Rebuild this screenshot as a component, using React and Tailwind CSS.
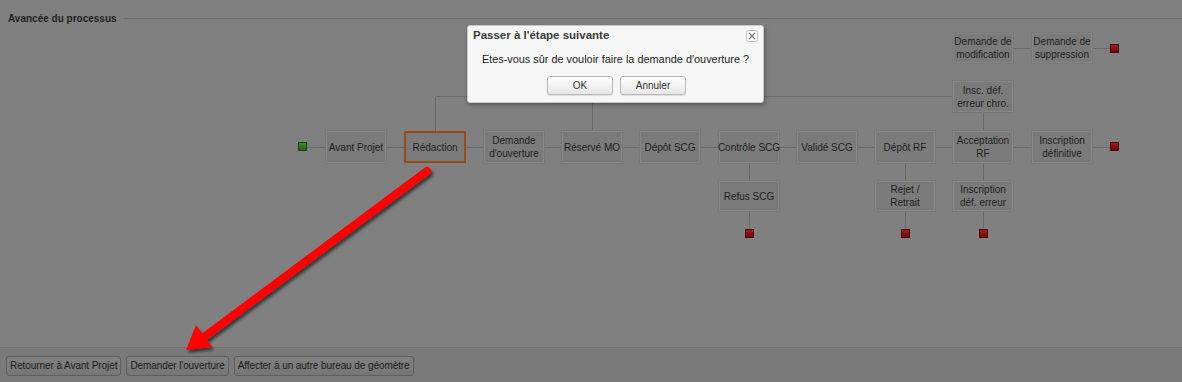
import React from "react";

const NODES = [
  { x: 326, y: 131, w: 60, h: 32, t: ["Avant Projet"] },
  { x: 404, y: 131, w: 62, h: 32, t: ["Rédaction"], active: true },
  { x: 484, y: 131, w: 60, h: 32, t: ["Demande", "d'ouverture"] },
  { x: 562, y: 131, w: 60, h: 32, t: ["Réservé MO"] },
  { x: 640, y: 131, w: 60, h: 32, t: ["Dépôt SCG"] },
  { x: 719, y: 131, w: 60, h: 32, t: ["Contrôle SCG"] },
  { x: 797, y: 131, w: 60, h: 32, t: ["Validé SCG"] },
  { x: 875, y: 131, w: 60, h: 32, t: ["Dépôt RF"] },
  { x: 953, y: 131, w: 60, h: 32, t: ["Acceptation", "RF"] },
  { x: 1032, y: 131, w: 60, h: 32, t: ["Inscription", "définitive"] },
  { x: 719, y: 181, w: 60, h: 30, t: ["Refus SCG"] },
  { x: 875, y: 181, w: 60, h: 30, t: ["Rejet /", "Retrait"] },
  { x: 953, y: 181, w: 60, h: 30, t: ["Inscription", "déf. erreur"] },
  { x: 953, y: 81, w: 60, h: 31, t: ["Insc. déf.", "erreur chro."] },
  { x: 953, y: 33, w: 60, h: 30, t: ["Demande de", "modification"] },
  { x: 1032, y: 33, w: 60, h: 30, t: ["Demande de", "suppression"] },
];

const ENDS = [
  { x: 1110, y: 142 },
  { x: 1110, y: 44 },
  { x: 745, y: 229 },
  { x: 901, y: 229 },
  { x: 979, y: 229 },
];

const TOP = 37;

function Node({ n }) {
  return (
    <div
      className={
        "absolute flex flex-col items-center justify-center text-center text-[10px] leading-[13px] text-[#1e1e1e] whitespace-nowrap " +
        (n.active
          ? "border-2 border-[#984a18] bg-[#7b7b7b]"
          : "border border-[#868686] bg-[#7b7b7b] shadow-[0_0_0_1px_#797979]")
      }
      style={{ left: n.x, top: n.y - TOP, width: n.w, height: n.h }}
    >
      {n.t.map((l, i) => (
        <span key={i}>{l}</span>
      ))}
    </div>
  );
}

function Square({ x, y, green }) {
  return (
    <div
      className={
        "absolute w-[9px] h-[9px] border " +
        (green
          ? "border-[#1d4012] bg-gradient-to-b from-[#3f8a2a] to-[#2a5f1a]"
          : "border-[#4a0606] bg-gradient-to-b from-[#a3191b] to-[#6e0a0a]")
      }
      style={{ left: x, top: y - TOP }}
    />
  );
}

function BarButton({ children }) {
  return (
    <button className="h-[20px] px-[3px] rounded-[3px] border border-[#5f5f5f] bg-gradient-to-b from-[#818181] to-[#767676] text-[10px] tracking-[-0.08px] text-[#1c1c1c] leading-none whitespace-nowrap">
      {children}
    </button>
  );
}

function DlgButton({ children }) {
  return (
    <button className="w-[66px] h-[19px] rounded-[3px] border border-[#b8b8b8] bg-gradient-to-b from-[#ffffff] to-[#e6e6e6] text-[10px] text-[#333] leading-none shadow-[0_1px_1px_rgba(0,0,0,0.1)]">
      {children}
    </button>
  );
}

export default function App() {
  const lineColor = "#6a6a6a";
  return (
    <div className="relative w-[1182px] h-[382px] bg-[#808080] overflow-hidden flex flex-col font-['Liberation_Sans',Arial,sans-serif]">
      {/* header */}
      <div className="h-[37px] flex items-center gap-[7px] pl-[8px] pb-[1px]">
        <span className="text-[10px] font-bold text-[#1f1f1f] whitespace-nowrap">
          Avancée du processus
        </span>
        <div className="flex-1 h-px bg-[#6d6d6d]" />
      </div>

      {/* diagram canvas */}
      <div className="relative flex-1">
        <svg
          className="absolute inset-0"
          width="1182"
          height="310"
          viewBox="0 37 1182 310"
          shapeRendering="crispEdges"
        >
          <g stroke={lineColor} strokeWidth="1" fill="none">
            <line x1="307" y1="147.5" x2="1110" y2="147.5" />
            <line x1="435.5" y1="96.5" x2="435.5" y2="131" />
            <line x1="435.5" y1="96.5" x2="953" y2="96.5" />
            <line x1="592.5" y1="96.5" x2="592.5" y2="131" />
            <line x1="983.5" y1="112" x2="983.5" y2="131" />
            <line x1="749.5" y1="163" x2="749.5" y2="229" />
            <line x1="905.5" y1="163" x2="905.5" y2="229" />
            <line x1="983.5" y1="163" x2="983.5" y2="229" />
            <line x1="1013" y1="48.5" x2="1110" y2="48.5" />
          </g>
        </svg>
        <Square x={298} y={142} green />
        {ENDS.map((e, i) => (
          <Square key={i} x={e.x} y={e.y} />
        ))}
        {NODES.map((n, i) => (
          <Node key={i} n={n} />
        ))}
      </div>

      {/* bottom bar */}
      <div className="h-[35px] border-t border-[#727272] bg-[#7a7a7a] flex items-center gap-[5px] pl-[6px] pt-[1px]">
        <BarButton>Retourner à Avant Projet</BarButton>
        <BarButton>Demander l'ouverture</BarButton>
        <BarButton>Affecter à un autre bureau de géomètre</BarButton>
      </div>

      {/* dialog */}
      <div className="absolute left-[467px] top-[25px] w-[297px] h-[78px] rounded-[3px] border border-[#c9c9c9] bg-[#f6f6f6] shadow-[1px_2px_4px_rgba(0,0,0,0.35)] flex flex-col">
        <div className="h-[20px] flex items-center justify-between pl-[5px] pr-[5px]">
          <span className="text-[11.5px] font-bold text-[#3a3a3a]">
            Passer à l'étape suivante
          </span>
          <div className="w-[12px] h-[12px] border border-[#c4c4c4] rounded-[2px] bg-[#fafafa] flex items-center justify-center">
            <svg width="8" height="8" viewBox="0 0 8 8">
              <path d="M1 1 L7 7 M7 1 L1 7" stroke="#777" strokeWidth="1.2" />
            </svg>
          </div>
        </div>
        <div className="h-[26px] flex items-center justify-center text-[10.9px] text-[#222]">
          Etes-vous sûr de vouloir faire la demande d'ouverture ?
        </div>
        <div className="mt-[4px] flex justify-center gap-[7px] pl-[2px]">
          <DlgButton>OK</DlgButton>
          <DlgButton>Annuler</DlgButton>
        </div>
      </div>

      {/* red arrow annotation */}
      <svg
        className="absolute inset-0 pointer-events-none"
        width="1182"
        height="382"
        viewBox="0 0 1182 382"
      >
        <defs>
          <filter id="ds" x="-20%" y="-20%" width="140%" height="140%">
            <feDropShadow dx="2" dy="3" stdDeviation="1.6" floodColor="#000" floodOpacity="0.55" />
          </filter>
        </defs>
        <g filter="url(#ds)">
          <line
            x1="427"
            y1="171"
            x2="204"
            y2="337"
            stroke="#ff0000"
            strokeWidth="8"
            strokeLinecap="round"
          />
          <polygon points="186,350 212,347 196,325" fill="#ff0000" />
        </g>
      </svg>
    </div>
  );
}
